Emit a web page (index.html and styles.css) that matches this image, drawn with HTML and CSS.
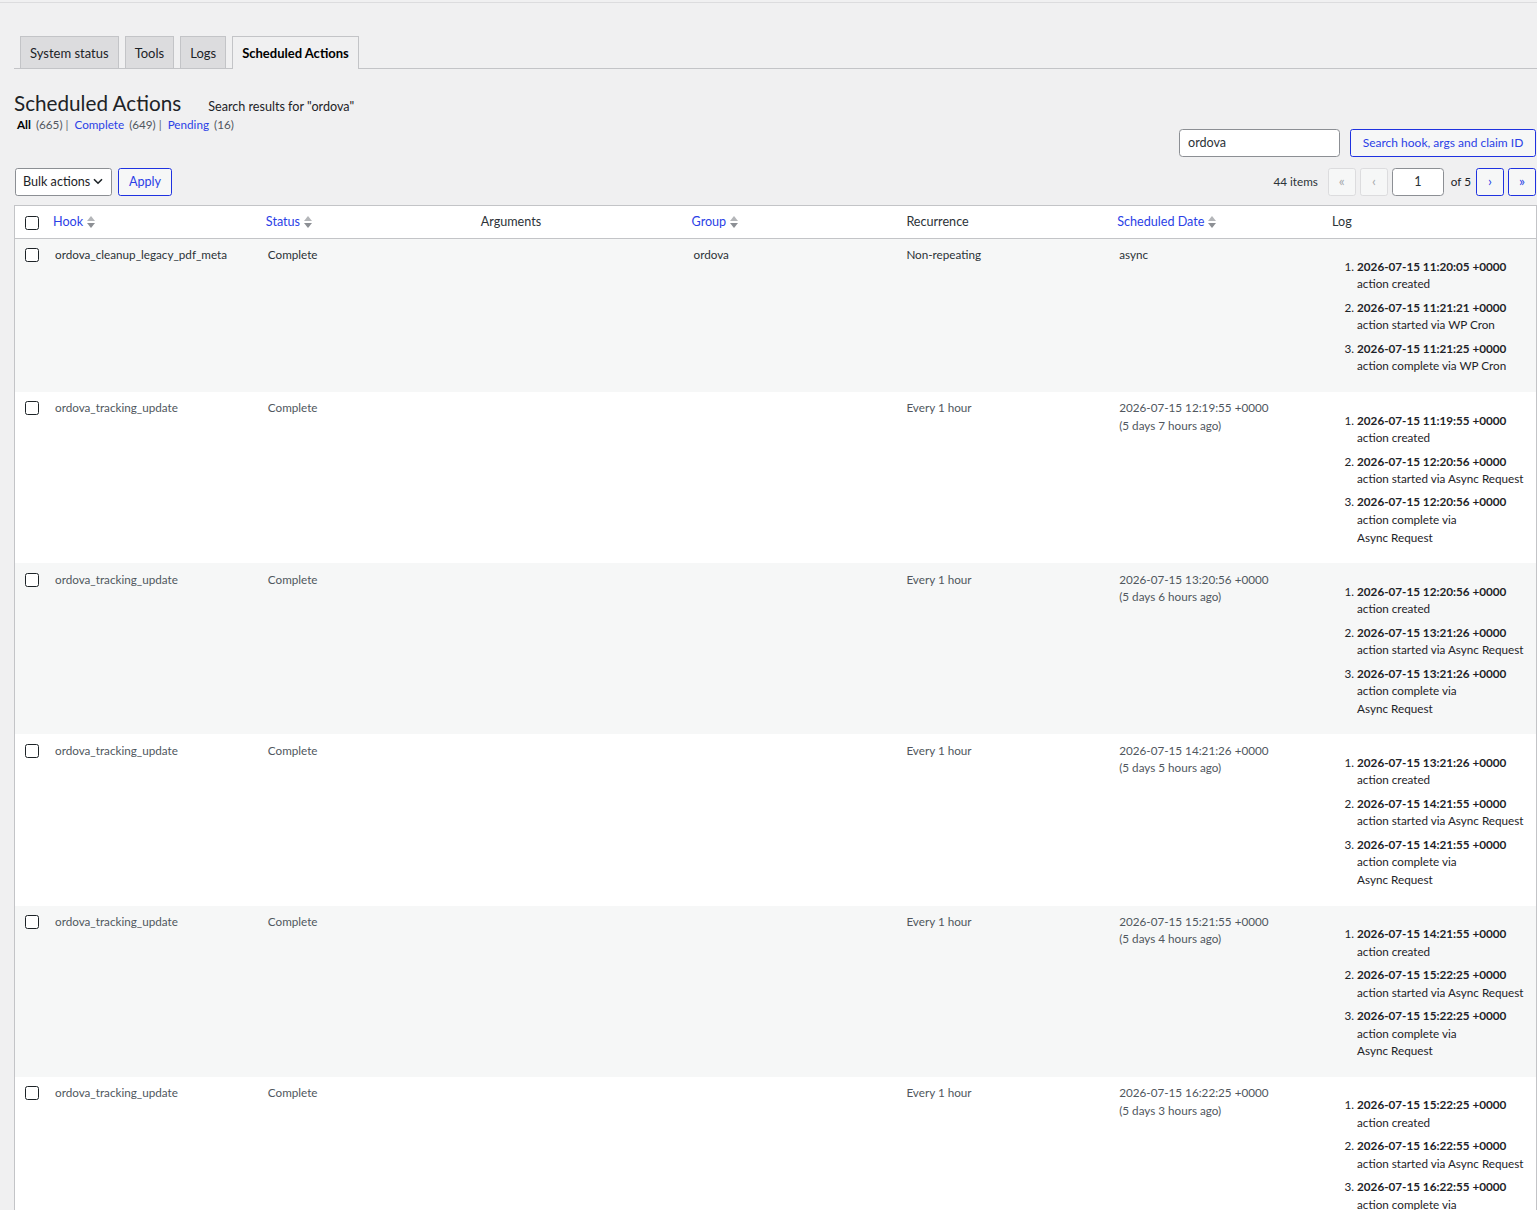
FILE: index.html
```html
<!DOCTYPE html>
<html lang="en">

<head>
  <meta charset="UTF-8">
  <meta name="viewport" content="width=device-width, initial-scale=1.0">
  <title>Scheduled Actions</title>
  <link rel="stylesheet" href="styles.css">
</head>

<body>
  <div class="topline"></div>

  <div class="wrap">
    <nav class="nav-tabs">
      <a class="nav-tab" href="#">System status</a>
      <a class="nav-tab" href="#">Tools</a>
      <a class="nav-tab" href="#">Logs</a>
      <a class="nav-tab active" href="#">Scheduled Actions</a>
    </nav>

    <h1 class="page-title">Scheduled Actions<span class="subtitle">Search results for "ordova"</span></h1>

    <div class="filters">
      <ul class="subsubsub">
        <li><b>All</b><span class="count">(665)</span><span class="sep">|</span></li>
        <li><a href="#">Complete</a><span class="count">(649)</span><span class="sep">|</span></li>
        <li><a href="#">Pending</a><span class="count">(16)</span></li>
      </ul>
      <div class="search-box">
        <input class="search-input" type="text" value="ordova">
        <button class="button search-btn">Search hook, args and claim ID</button>
      </div>
    </div>

    <div class="tablenav">
      <div class="bulk">
        <div class="select">Bulk actions
          <svg width="10" height="7" viewBox="0 0 10 7"><path d="M1 1.2l4 4 4-4" fill="none" stroke="#1d2327" stroke-width="1.6"/></svg>
        </div>
        <button class="button">Apply</button>
      </div>
      <div class="pages">
        <span class="num-items">44 items</span>
        <span class="page-btn disabled">&laquo;</span>
        <span class="page-btn disabled">&lsaquo;</span>
        <input class="page-input" type="text" value="1">
        <span class="of">of 5</span>
        <a class="page-btn" href="#">&rsaquo;</a>
        <a class="page-btn" href="#">&raquo;</a>
      </div>
    </div>

    <table class="actions">
      <colgroup>
        <col class="col-check">
        <col><col><col><col><col><col><col>
      </colgroup>
      <thead>
        <tr>
          <th class="check"><input type="checkbox"></th>
          <th><a class="sort" href="#">Hook <svg class="arrows" width="8" height="14" viewBox="0 0 8 14"><path d="M0 6L4 1l4 5z" fill="#b4b6b9"/><path d="M0 8h8l-4 5z" fill="#8c8f94"/></svg></a></th>
          <th><a class="sort" href="#">Status <svg class="arrows" width="8" height="14" viewBox="0 0 8 14"><path d="M0 6L4 1l4 5z" fill="#b4b6b9"/><path d="M0 8h8l-4 5z" fill="#8c8f94"/></svg></a></th>
          <th>Arguments</th>
          <th><a class="sort" href="#">Group <svg class="arrows" width="8" height="14" viewBox="0 0 8 14"><path d="M0 6L4 1l4 5z" fill="#b4b6b9"/><path d="M0 8h8l-4 5z" fill="#8c8f94"/></svg></a></th>
          <th>Recurrence</th>
          <th><a class="sort" href="#">Scheduled Date <svg class="arrows" width="8" height="14" viewBox="0 0 8 14"><path d="M0 6L4 1l4 5z" fill="#b4b6b9"/><path d="M0 8h8l-4 5z" fill="#8c8f94"/></svg></a></th>
          <th>Log</th>
        </tr>
      </thead>
      <tbody>
        <tr class="first">
          <td class="check"><input type="checkbox"></td>
          <td>ordova_cleanup_legacy_pdf_meta</td>
          <td>Complete</td>
          <td></td>
          <td>ordova</td>
          <td>Non-repeating</td>
          <td>async</td>
          <td>
            <ol class="log">
              <li><strong>2026-07-15 11:20:05 +0000</strong><br>action created</li>
              <li><strong>2026-07-15 11:21:21 +0000</strong><br>action started via WP Cron</li>
              <li><strong>2026-07-15 11:21:25 +0000</strong><br>action complete via WP Cron</li>
            </ol>
          </td>
        </tr>
        <tr>
          <td class="check"><input type="checkbox"></td>
          <td>ordova_tracking_update</td>
          <td>Complete</td>
          <td></td>
          <td></td>
          <td>Every 1 hour</td>
          <td>2026-07-15 12:19:55 +0000<br>(5 days 7 hours ago)</td>
          <td>
            <ol class="log">
              <li><strong>2026-07-15 11:19:55 +0000</strong><br>action created</li>
              <li><strong>2026-07-15 12:20:56 +0000</strong><br>action started via Async Request</li>
              <li><strong>2026-07-15 12:20:56 +0000</strong><br>action complete via Async&nbsp;Request</li>
            </ol>
          </td>
        </tr>
        <tr>
          <td class="check"><input type="checkbox"></td>
          <td>ordova_tracking_update</td>
          <td>Complete</td>
          <td></td>
          <td></td>
          <td>Every 1 hour</td>
          <td>2026-07-15 13:20:56 +0000<br>(5 days 6 hours ago)</td>
          <td>
            <ol class="log">
              <li><strong>2026-07-15 12:20:56 +0000</strong><br>action created</li>
              <li><strong>2026-07-15 13:21:26 +0000</strong><br>action started via Async Request</li>
              <li><strong>2026-07-15 13:21:26 +0000</strong><br>action complete via Async&nbsp;Request</li>
            </ol>
          </td>
        </tr>
        <tr>
          <td class="check"><input type="checkbox"></td>
          <td>ordova_tracking_update</td>
          <td>Complete</td>
          <td></td>
          <td></td>
          <td>Every 1 hour</td>
          <td>2026-07-15 14:21:26 +0000<br>(5 days 5 hours ago)</td>
          <td>
            <ol class="log">
              <li><strong>2026-07-15 13:21:26 +0000</strong><br>action created</li>
              <li><strong>2026-07-15 14:21:55 +0000</strong><br>action started via Async Request</li>
              <li><strong>2026-07-15 14:21:55 +0000</strong><br>action complete via Async&nbsp;Request</li>
            </ol>
          </td>
        </tr>
        <tr>
          <td class="check"><input type="checkbox"></td>
          <td>ordova_tracking_update</td>
          <td>Complete</td>
          <td></td>
          <td></td>
          <td>Every 1 hour</td>
          <td>2026-07-15 15:21:55 +0000<br>(5 days 4 hours ago)</td>
          <td>
            <ol class="log">
              <li><strong>2026-07-15 14:21:55 +0000</strong><br>action created</li>
              <li><strong>2026-07-15 15:22:25 +0000</strong><br>action started via Async Request</li>
              <li><strong>2026-07-15 15:22:25 +0000</strong><br>action complete via Async&nbsp;Request</li>
            </ol>
          </td>
        </tr>
        <tr>
          <td class="check"><input type="checkbox"></td>
          <td>ordova_tracking_update</td>
          <td>Complete</td>
          <td></td>
          <td></td>
          <td>Every 1 hour</td>
          <td>2026-07-15 16:22:25 +0000<br>(5 days 3 hours ago)</td>
          <td>
            <ol class="log">
              <li><strong>2026-07-15 15:22:25 +0000</strong><br>action created</li>
              <li><strong>2026-07-15 16:22:55 +0000</strong><br>action started via Async Request</li>
              <li><strong>2026-07-15 16:22:55 +0000</strong><br>action complete via Async&nbsp;Request</li>
            </ol>
          </td>
        </tr>
      </tbody>
    </table>
  </div>
</body>

</html>
```
FILE: styles.css
```css
body {
  margin: 0;
  padding: 0;
  background-color: #f0f0f1;
  color: #3c434a;
  font-family: 'Lato', 'Open Sans', sans-serif;
  font-size: 11.7px;
  line-height: 17.55px;
}

a {
  color: #2b3fe6;
  text-decoration: none;
}

.topline {
  margin-top: 2px;
  border-top: 1px solid #dcdcde;
}

.wrap {
  padding-left: 14px;
}

/* Tabs */
.nav-tabs {
  display: flex;
  gap: 6px;
  padding: 33px 0 0 6px;
  border-bottom: 1px solid #c3c4c7;
}

.nav-tab {
  display: block;
  padding: 5.5px 9px 3.5px;
  font-size: 13px;
  line-height: 21.6px;
  color: #1d2327;
  background-color: #dcdcde;
  border: 1px solid #c3c4c7;
  border-bottom: none;
}

.nav-tab.active {
  background-color: #f0f0f1;
  color: #000;
  font-weight: 700;
  margin-bottom: -1px;
  padding-bottom: 4.5px;
}

/* Heading */
.page-title {
  margin: 0;
  padding-top: 22px;
  font-size: 20.7px;
  line-height: 24px;
  font-weight: 400;
  color: #1d2327;
}

.subtitle {
  display: inline-block;
  margin-left: 27px;
  font-size: 12.6px;
  line-height: 1;
  color: #1d2327;
}

.filters {
  display: flex;
  justify-content: space-between;
  align-items: flex-start;
}

.subsubsub {
  display: flex;
  margin: 1px 0 0;
  padding: 0 0 0 3px;
  list-style: none;
  line-height: 16px;
  color: #646970;
}

.subsubsub li {
  margin-right: 6px;
}

.subsubsub b {
  color: #000;
}

.count {
  margin-left: 5px;
  color: #50575e;
}

.sep {
  margin-left: 3px;
  color: #646970;
}

.search-box {
  display: flex;
  gap: 10px;
  margin-top: 14px;
  margin-right: 1px;
}

.search-input {
  width: 161px;
  height: 28px;
  box-sizing: border-box;
  padding: 0 8px;
  border: 1px solid #8c8f94;
  border-radius: 3.6px;
  font-family: inherit;
  font-size: 12.6px;
  color: #2c3338;
  background: #fff;
}

.button {
  height: 28px;
  padding: 0 10.5px;
  border: 1px solid #1f32e0;
  border-radius: 2.7px;
  background: #f6f7f7;
  color: #2b3fe6;
  font-family: inherit;
  font-size: 11.7px;
}

.search-btn {
  width: 186px;
  padding: 0;
  font-size: 12px;
}

/* Table navigation */
.tablenav {
  display: flex;
  justify-content: space-between;
  align-items: center;
  margin-top: 11px;
  margin-right: 1px;
  height: 28px;
}

.bulk {
  display: flex;
  gap: 6px;
  padding-left: 1px;
}

.select {
  display: flex;
  align-items: center;
  gap: 3px;
  box-sizing: border-box;
  width: 97px;
  height: 28px;
  padding: 0 7px;
  border: 1px solid #8c8f94;
  border-radius: 2.7px;
  background: #fff;
  color: #1d2327;
  font-size: 12.6px;
  white-space: nowrap;
}

.bulk .button {
  width: 54px;
  padding: 0;
  font-size: 12.6px;
}

.pages {
  display: flex;
  align-items: center;
  gap: 4px;
}

.num-items {
  margin-right: 6px;
  color: #2c3338;
}

.page-btn {
  display: flex;
  align-items: center;
  justify-content: center;
  box-sizing: border-box;
  width: 28px;
  height: 28px;
  border: 1px solid #1f32e0;
  border-radius: 2.7px;
  background: #f6f7f7;
  color: #2b3fe6;
  font-size: 14px;
  padding-bottom: 2px;
}

.page-btn.disabled {
  border-color: #dcdcde;
  color: #a7aaad;
}

.page-input {
  width: 52px;
  height: 28px;
  box-sizing: border-box;
  border: 1px solid #8c8f94;
  border-radius: 3.6px;
  text-align: center;
  font-family: inherit;
  font-size: 12.6px;
  color: #2c3338;
  background: #fff;
}

.of {
  margin: 0 1px 0 3px;
  color: #1d2327;
}

/* Table */
.actions {
  width: 1523px;
  margin-top: 9px;
  table-layout: fixed;
  border-collapse: separate;
  border-spacing: 0;
  border: 1px solid #c3c4c7;
  background: #fff;
}

.col-check {
  width: 31px;
}

.actions th {
  padding: 7.7px 9px 6.7px;
  border-bottom: 1px solid #c3c4c7;
  text-align: left;
  font-weight: 400;
  font-size: 12.6px;
  color: #2c3338;
}

.actions th .sort {
  display: inline-flex;
  align-items: center;
  gap: 4px;
  margin-left: -2px;
}

.actions td {
  padding: 7.2px 9px;
  vertical-align: top;
  color: #50575e;
}

.actions tbody tr:nth-child(odd) td {
  background: #f6f7f7;
}

.actions tr.first td {
  color: #2c3338;
}

.actions .check {
  padding: 8.2px 0 0 10px;
}

.actions th.check {
  padding-top: 9px;
  padding-bottom: 0;
  vertical-align: top;
}

.actions input[type="checkbox"] {
  appearance: none;
  display: block;
  width: 14px;
  height: 14px;
  margin: 1px 0 0;
  border: 1px solid #1d2327;
  border-radius: 2.5px;
  background: #fff;
}

.log {
  margin: 12.2px 0 10px 25px;
  padding: 0;
}

.actions tr td .log {
  color: #1d2327;
}

.log li {
  margin-bottom: 5.9px;
}

.log strong {
  font-weight: 700;
}
```
